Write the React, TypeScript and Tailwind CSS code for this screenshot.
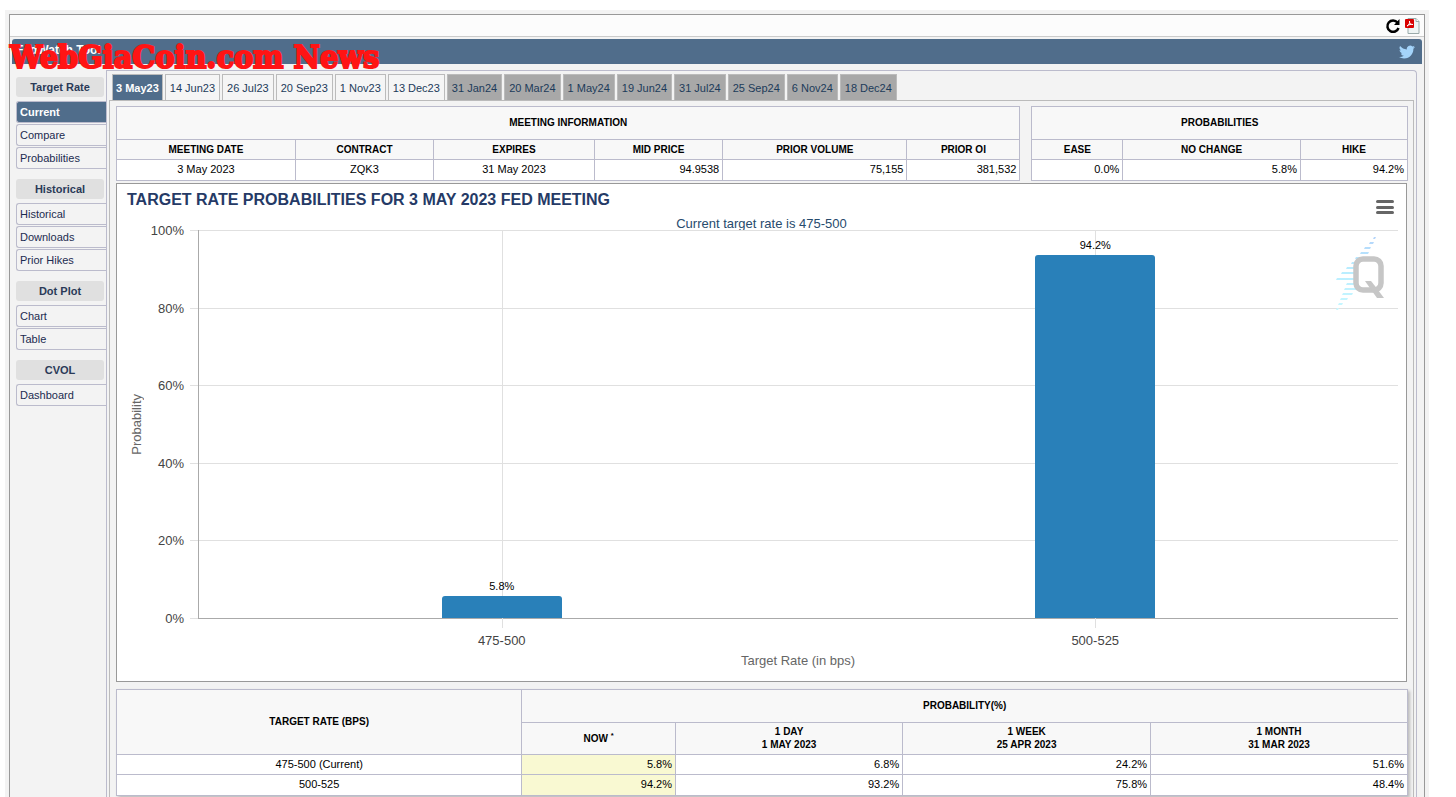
import { useState } from "react";

const tabs = [
    "3 May23", "14 Jun23", "26 Jul23", "20 Sep23", "1 Nov23", "13 Dec23", "31 Jan24",
    "20 Mar24", "1 May24", "19 Jun24", "31 Jul24", "25 Sep24", "6 Nov24", "18 Dec24",
];

const menu = [
    { title: "Target Rate", items: ["Current", "Compare", "Probabilities"] },
    { title: "Historical", items: ["Historical", "Downloads", "Prior Hikes"] },
    { title: "Dot Plot", items: ["Chart", "Table"] },
    { title: "CVOL", items: ["Dashboard"] },
];

const bars = [
    { label: "475-500", value: 5.8 },
    { label: "500-525", value: 94.2 },
];

const ticks = ["100%", "80%", "60%", "40%", "20%", "0%"];

// light rays of the quote logo: x, y, width
const rays = [
    [37, 0, 2], [33, 5, 4], [28, 10, 6], [24, 15, 8], [19, 20, 10], [15, 25, 12], [10, 30, 14],
    [5, 35, 18], [0, 41, 22], [10, 46, 12], [8, 51, 12], [6, 56, 10], [4, 61, 7], [2, 66, 4], [0, 71, 2],
];

const th = "border border-[#bbbbcc] bg-[#f8f8f8] text-[10px] font-bold uppercase";
const td = "border border-[#bbbbcc] bg-white px-[3px] pb-0.5";

function Sidebar() {
    const [active, setActive] = useState("Current");

    return (
        <nav className="w-[97px] shrink-0 pl-1.5 pt-[7px] text-[11px] text-[#1c2b50]">
            {menu.map((group) => (
                <div key={group.title} className="mb-2.5">
                    <h2 className="mr-[3px] h-5 rounded-[3px] bg-[#e0e0e0] text-center font-bold leading-5 text-[#2a3a58]">{group.title}</h2>
                    <div className="mt-1 flex flex-col gap-px">
                        {group.items.map((item) => (
                            <button
                                key={item}
                                onClick={() => setActive(item)}
                                className={`h-[22px] rounded-l-[3px] border border-r-0 border-[#bbbbcc] pl-[3px] text-left ${
                                    active === item ? "bg-[#506d8b] font-bold text-white" : ""
                                }`}
                            >
                                {item}
                            </button>
                        ))}
                    </div>
                </div>
            ))}
        </nav>
    );
}

function InfoTables() {
    return (
        <div className="flex gap-[11px]">
            <table className="w-[70%] table-fixed border-collapse">
                <colgroup>
                    <col className="w-[19.8%]" />
                    <col className="w-[15.3%]" />
                    <col className="w-[17.8%]" />
                    <col className="w-[14.2%]" />
                    <col className="w-[20.4%]" />
                    <col />
                </colgroup>
                <thead>
                    <tr className="h-[33px]"><th colSpan={6} className={th}>Meeting Information</th></tr>
                    <tr className="h-5">
                        {["Meeting Date", "Contract", "Expires", "Mid Price", "Prior Volume", "Prior OI"].map((h) => (
                            <th key={h} className={th}>{h}</th>
                        ))}
                    </tr>
                </thead>
                <tbody>
                    <tr className="h-[21px] text-right">
                        <td className={`${td} text-center`}>3 May 2023</td>
                        <td className={`${td} text-center`}>ZQK3</td>
                        <td className={`${td} text-center`}>31 May 2023</td>
                        <td className={td}>94.9538</td>
                        <td className={td}>75,155</td>
                        <td className={td}>381,532</td>
                    </tr>
                </tbody>
            </table>
            <table className="flex-1 table-fixed border-collapse">
                <colgroup>
                    <col className="w-[24.2%]" />
                    <col className="w-[47.3%]" />
                    <col />
                </colgroup>
                <thead>
                    <tr className="h-[33px]"><th colSpan={3} className={th}>Probabilities</th></tr>
                    <tr className="h-5">
                        <th className={th}>Ease</th>
                        <th className={th}>No Change</th>
                        <th className={th}>Hike</th>
                    </tr>
                </thead>
                <tbody>
                    <tr className="h-[21px] text-right">
                        <td className={td}>0.0%</td>
                        <td className={td}>5.8%</td>
                        <td className={td}>94.2%</td>
                    </tr>
                </tbody>
            </table>
        </div>
    );
}

function QuoteLogo() {
    return (
        <svg width="50" height="75" viewBox="0 0 50 75" className="absolute right-3 top-[7px]" aria-hidden="true">
            <defs>
                <linearGradient id="rays" gradientUnits="userSpaceOnUse" x1="0" y1="0" x2="0" y2="75">
                    <stop offset="0" stopColor="#b4d4fa" />
                    <stop offset="0.4" stopColor="#b8ecff" />
                    <stop offset="1" stopColor="#c8f8ff" />
                </linearGradient>
            </defs>
            {rays.map(([x, y, w]) => (
                <path key={y} d={`M${x + 1} ${y}h${w}l-1 2h-${w}z`} fill="url(#rays)" />
            ))}
            <rect x="20" y="22" width="25" height="31" rx="7" fill="white" stroke="#c6c6c6" strokeWidth="5.500" />
            <path d="M29 44h6l4 5 9 12h-7l-5-7z" fill="#c6c6c6" />
        </svg>
    );
}

function Chart() {
    return (
        <section className="mr-px mt-0.5 border border-[#999999] bg-white pb-3">
            <div className="flex h-[46px] justify-between pl-2.5 pr-3">
                <h1 className="mt-1 text-[16px] font-bold leading-6 text-[#253a66]">TARGET RATE PROBABILITIES FOR 3 MAY 2023 FED MEETING</h1>
                <button aria-label="Chart menu" className="mt-4 flex h-3.5 w-[18px] flex-col justify-between">
                    <span className="h-[3px] w-full rounded-full bg-[#666666]" />
                    <span className="h-[3px] w-full rounded-full bg-[#666666]" />
                    <span className="h-[3px] w-full rounded-full bg-[#666666]" />
                </button>
            </div>
            <div className="relative flex h-[389px] pr-2">
                <p className="absolute -top-3.5 inset-x-0 text-center text-[13px] leading-4 text-[#274b6d]">Current target rate is 475-500</p>
                <div className="flex w-10 items-center justify-center">
                    <span className="rotate-180 text-[13px] leading-4 text-[#666666] [writing-mode:vertical-rl]">Probability</span>
                </div>
                <div className="-mb-2 -mt-[7px] flex w-[27px] flex-col justify-between text-right text-[13px] leading-4 text-[#444444]">
                    {ticks.map((t) => <span key={t} className="-ml-4">{t}</span>)}
                </div>
                <div className="flex w-3.5 flex-col justify-between pl-1.5">
                    {ticks.map((t) => <span key={t} className="h-px bg-[#e0e0e0]" />)}
                </div>
                <div className="relative flex-1">
                    <div className="absolute inset-0 flex flex-col justify-between">
                        {ticks.map((t) => <span key={t} className="h-px bg-[#e0e0e0]" />)}
                    </div>
                    <QuoteLogo />
                    <div className="absolute inset-0 flex border-b border-l border-[#aaaaaa] px-1.5">
                        {bars.map((bar) => (
                            <div key={bar.label} className="relative flex flex-1 flex-col items-center justify-end pt-[3px]">
                                <span className="absolute -bottom-2.5 left-1/2 top-0 w-px bg-[#e0e0e0]" />
                                <span className="relative mb-0.5 text-[11px] leading-4 text-black">{bar.value}%</span>
                                <div className="relative w-[120px] rounded-t-[3px] bg-[#2980b9]" style={{ height: `${bar.value}%` }} />
                            </div>
                        ))}
                    </div>
                </div>
            </div>
            <div className="ml-[88px] mr-3.5 mt-3.5 flex text-center text-[13px] leading-4 text-[#444444]">
                {bars.map((bar) => <span key={bar.label} className="flex-1">{bar.label}</span>)}
            </div>
            <p className="ml-[81px] mr-2 mt-1 text-center text-[13px] leading-4 text-[#666666]">Target Rate (in bps)</p>
        </section>
    );
}

function HistoryTable() {
    return (
        <table className="mt-[7px] w-full table-fixed border-collapse shadow-[2px_2px_3px_#bbbbbb]">
            <colgroup>
                <col className="w-[31.4%]" />
                <col className="w-[11.9%]" />
                <col className="w-[17.6%]" />
                <col className="w-[19.2%]" />
                <col />
            </colgroup>
            <thead>
                <tr className="h-[33px]">
                    <th rowSpan={2} className={th}>Target Rate (bps)</th>
                    <th colSpan={4} className={th}>Probability(%)</th>
                </tr>
                <tr className="h-8 leading-[13px]">
                    <th className={th}>Now <sup>*</sup></th>
                    <th className={`${th} pb-0.5`}>1 Day<br />1 May 2023</th>
                    <th className={`${th} pb-0.5`}>1 Week<br />25 Apr 2023</th>
                    <th className={`${th} pb-0.5`}>1 Month<br />31 Mar 2023</th>
                </tr>
            </thead>
            <tbody className="text-right">
                {[
                    ["475-500 (Current)", "5.8%", "6.8%", "24.2%", "51.6%"],
                    ["500-525", "94.2%", "93.2%", "75.8%", "48.4%"],
                ].map(([rate, now, ...rest], i) => (
                    <tr key={rate} className={i === 0 ? "h-5" : "h-[21px]"}>
                        <td className={`${td} text-center`}>{rate}</td>
                        <td className="border border-[#bbbbcc] bg-[#f9f9d2] px-[3px] pb-0.5">{now}</td>
                        {rest.map((v) => <td key={v} className={td}>{v}</td>)}
                    </tr>
                ))}
            </tbody>
        </table>
    );
}

export default function App() {
    const [tab, setTab] = useState("3 May23");

    return (
        <div className="flex min-h-screen flex-col bg-white pl-[5px] pr-[27px] pt-2.5 font-['Liberation_Sans',Arial,sans-serif] text-[11px] leading-4 text-black">
            <div className="flex flex-1 flex-col bg-[#f3f3f3] px-1 pt-1">
                <div className="flex flex-1 flex-col border border-b-0 border-[#999999]">
                    <div className="flex h-[22px] items-center justify-end gap-1 border-b border-[#cccccc] bg-[#fcfcfc] pr-[3px]">
                        <button aria-label="Reload">
                            <svg width="16" height="16" viewBox="0 0 16 16" fill="none">
                                <path d="M12.500 4.500A5.700 5.700 0 1 0 13.500 10" stroke="black" strokeWidth="2.500" />
                                <path d="M14.500 1v6H9z" fill="black" />
                            </svg>
                        </button>
                        <button aria-label="Save as PDF">
                            <svg width="16" height="16" viewBox="0 0 16 16">
                                <path d="M3 .5h8l3 3v12H3z" fill="#eef4f4" stroke="#9aaaaa" />
                                <path d="M11 .5v3h3" fill="white" stroke="#9aaaaa" />
                                <rect y="1" width="9" height="9" rx="1" fill="#d80000" />
                                <path d="M2 8c2-1 3-3 2.500-5C4 5 6 7 8 6.500 6 6 4 6.500 2 8z" fill="none" stroke="white" />
                            </svg>
                        </button>
                    </div>
                    <header className="relative mx-0.5 mt-0.5 flex h-[25px] items-center justify-between rounded-t-[3px] bg-[#506d8b] pl-1 pr-[7px]">
                        <span className="pb-1 text-[12px] font-bold text-white">FedWatch Tool</span>
                        <a href="#twitter" aria-label="Twitter">
                            <svg width="16" height="16" viewBox="0 0 24 24" fill="#a4d4fa">
                                <path d="M23.950 4.570a10 10 0 0 1-2.820.77 4.960 4.960 0 0 0 2.160-2.720c-.95.56-2 .96-3.120 1.180a4.920 4.920 0 0 0-8.380 4.480C7.690 8.090 4.070 6.130 1.640 3.160a4.920 4.920 0 0 0 1.520 6.570 4.900 4.900 0 0 1-2.230-.61v.06c0 2.380 1.700 4.370 3.950 4.820a5 5 0 0 1-2.210.09 4.940 4.940 0 0 0 4.600 3.420A9.870 9.870 0 0 1 0 19.540a14 14 0 0 0 7.550 2.210c9.050 0 14-7.500 14-13.980l-.02-.64a9.940 9.940 0 0 0 2.420-2.560z" />
                            </svg>
                        </a>
                        <span className="absolute -left-0.5 top-0 whitespace-nowrap font-['DejaVu_Serif_Condensed','DejaVu_Serif',serif] text-[32px] font-bold leading-9 text-[#ff1414] [-webkit-text-stroke:2px_#ff1414]">WebGiaCoin.com News</span>
                    </header>
                    <div className="flex flex-1 pr-[7px] pt-1.5">
                        <Sidebar />
                        <main className="-ml-px min-w-0 flex-1 rounded-tr-[4px] border border-b-0 border-[#bbbbcc] pl-0.5 pr-0.5 pt-[3px]">
                            <div role="tablist" className="flex gap-0.5 pl-[3px]">
                                {tabs.map((t, i) => (
                                    <button
                                        key={t}
                                        role="tab"
                                        aria-selected={tab === t}
                                        onClick={() => setTab(t)}
                                        className={`h-[26px] whitespace-nowrap border border-b-0 border-[#bbbbbb] ${
                                            tab === t
                                                ? "bg-[#506d8b] px-[3px] font-bold text-white"
                                                : i > 5
                                                  ? "bg-[#a8a8a8] px-1 text-[#1c3b5a]"
                                                  : "bg-[#f5f5f5] px-1 text-[#1c3b5a]"
                                        }`}
                                    >
                                        {t}
                                    </button>
                                ))}
                            </div>
                            <div className="h-[calc(100%-26px)] border border-b-0 border-[#bbbbbb] pl-1.5 pr-[5px] pt-[5px]">
                                <InfoTables />
                                <Chart />
                                <HistoryTable />
                            </div>
                        </main>
                    </div>
                </div>
            </div>
        </div>
    );
}
